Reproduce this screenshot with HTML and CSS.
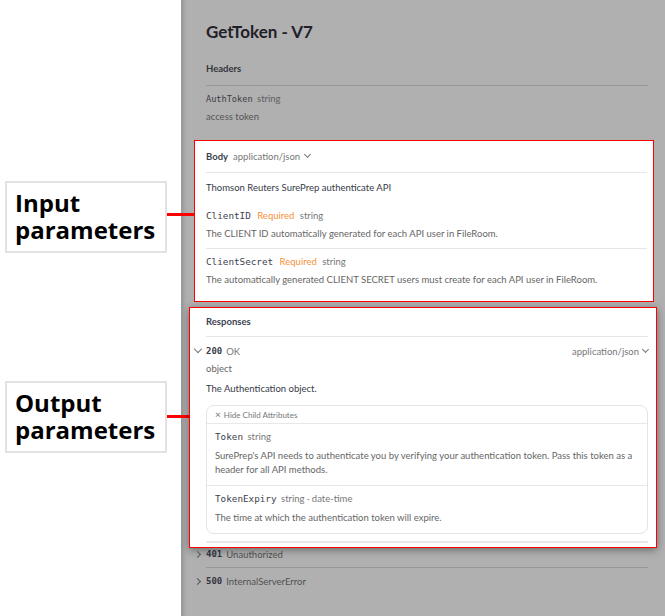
FILE: index.html
```html
<!DOCTYPE html>
<html lang="en">
<head>
<meta name="viewport" content="width=device-width, initial-scale=1">
<title>GetToken - V7</title>
<link rel="stylesheet" href="styles.css">
</head>
<body>

<div class="notes">
    <div class="note note-input">Input parameters</div>
    <div class="note note-output">Output parameters</div>
</div>

<div class="panel">
    <h1 class="title">GetToken - V7</h1>

    <div class="section-head">Headers</div>
    <div class="param"><span class="name">AuthToken</span> <span class="type">string</span></div>
    <div class="desc">access token</div>

    <!-- request body -->
    <div class="callout callout-input">
        <div class="box-head">
            <span class="strong">Body</span>
            <span class="type">application/json</span>
            <span class="chev down"></span>
        </div>
        <div class="lead">Thomson Reuters SurePrep authenticate API</div>
        <div class="field first">
            <div class="param"><span class="name">ClientID</span> <span class="req">Required</span> <span class="type">string</span></div>
            <div class="desc">The CLIENT ID automatically generated for each API user in FileRoom.</div>
        </div>
        <div class="field">
            <div class="param"><span class="name">ClientSecret</span> <span class="req">Required</span> <span class="type">string</span></div>
            <div class="desc">The automatically generated CLIENT SECRET users must create for each API user in FileRoom.</div>
        </div>
    </div>

    <!-- responses -->
    <div class="callout callout-output">
        <div class="box-head">
            <span class="strong">Responses</span>
        </div>
        <div class="status-row">
            <span class="chev down lead-chev"></span>
            <span class="code">200</span> <span class="type">OK</span>
            <span class="spacer"></span>
            <span class="type">application/json</span>
            <span class="chev down"></span>
        </div>
        <div class="object">object</div>
        <div class="lead obj-desc">The Authentication object.</div>

        <div class="children">
            <div class="children-head"><span class="x">&times;</span> Hide Child Attributes</div>
            <div class="child">
                <div class="param"><span class="name">Token</span> <span class="type">string</span></div>
                <div class="desc wrap">SurePrep's API needs to authenticate you by verifying your authentication token. Pass this token as a header for all API methods.</div>
            </div>
            <div class="child">
                <div class="param"><span class="name">TokenExpiry</span> <span class="type">string &middot; date-time</span></div>
                <div class="desc">The time at which the authentication token will expire.</div>
            </div>
        </div>
        <div class="end-rule"></div>
    </div>

    <div class="status-row closed">
        <span class="chev right"></span>
        <span class="code">401</span> <span class="type">Unauthorized</span>
    </div>
    <div class="status-row closed last">
        <span class="chev right"></span>
        <span class="code">500</span> <span class="type">InternalServerError</span>
    </div>
</div>

</body>
</html>
```

FILE: styles.css
```css
* {
    box-sizing: border-box;
}

body {
    margin: 0;
    width: 665px;
    height: 616px;
    display: flex;
    background: #fff;
    font-family: 'Lato', sans-serif;
    font-size: 9.5px;
    overflow: hidden;
}

/* annotation labels on the left */
.notes {
    width: 181px;
    flex: none;
    padding-top: 181px;
}

.note {
    position: relative;
    width: 162px;
    height: 72px;
    margin-left: 5px;
    padding: 6px 0 0 8px;
    border: 2px solid #e2e2e2;
    font-family: 'Open Sans', sans-serif;
    font-weight: 700;
    font-size: 24px;
    line-height: 27px;
    color: #000;
}

.note::after {
    content: '';
    position: absolute;
    top: 30px;
    left: 160px;
    height: 3px;
    background: #f00;
}

.note-input::after {
    width: 27px;
}

.note-output {
    margin-top: 128px;
}

.note-output::after {
    top: 32px;
    width: 22px;
}

/* dimmed docs panel */
.panel {
    flex: 1;
    padding: 22px 17px 0 25px;
    background: linear-gradient(to right, #979797 0, #adadad 5px, #b0b0b0 8px);
    color: #3a3a3a;
}

.title {
    margin: 0;
    font-size: 17px;
    line-height: 20px;
    font-weight: 700;
    color: #1f2029;
}

.section-head {
    margin-top: 20px;
    padding-bottom: 9px;
    border-bottom: 1px solid #979797;
    line-height: 14px;
    font-weight: 700;
    color: #34353d;
}

.param {
    line-height: 14px;
    white-space: nowrap;
}

.panel > .param {
    margin-top: 6px;
}

.name {
    font-family: 'DejaVu Sans Mono', monospace;
    font-size: 8.6px;
    color: #3c3c44;
    margin-right: 2px;
}

.type {
    color: #5f5f5f;
}

.desc {
    margin-top: 4px;
    line-height: 14px;
    color: #555;
}

/* highlighted boxes */
.callout {
    background: #fff;
    border: 1px solid #f00;
}

.callout .type {
    color: #777;
}

.callout .desc {
    color: #666;
}

.callout-input {
    margin: 16px -6px 0 -12px;
    padding: 8px 6px 0 11px;
    height: 162px;
}

.callout-output {
    margin: 5px -9px 0 -17px;
    padding: 6px 8px 0 16px;
    height: 241px;
    box-shadow: 0 2px 8px rgba(0, 0, 0, 0.4);
    position: relative;
}

.box-head {
    display: flex;
    align-items: center;
    gap: 5px;
    height: 14px;
    box-sizing: content-box;
    padding-bottom: 9px;
    border-bottom: 1px solid #e6e6e6;
}

.callout-output .box-head {
    padding-bottom: 8px;
}

.strong {
    font-weight: 700;
    color: #3b3f51;
}

.lead {
    margin-top: 8px;
    line-height: 14px;
    color: #363a48;
}

.field.first {
    margin-top: 14px;
}

.field {
    padding-bottom: 7px;
}

.field + .field {
    border-top: 1px solid #e6e6e6;
    padding-top: 6px;
}

.callout .name {
    font-size: 9.3px;
    color: #40424f;
}

.req {
    color: #f5903a;
    margin: 0 3px 0 2px;
}

.chev {
    display: inline-block;
    width: 5px;
    height: 5px;
    border-right: 1px solid #777;
    border-bottom: 1px solid #777;
}

.chev.down {
    transform: translateY(-2px) rotate(45deg);
}

.chev.right {
    transform: rotate(-45deg);
    border-color: #555;
    margin: 0 2px 0 -11px;
}

/* response rows */
.status-row {
    display: flex;
    align-items: center;
    gap: 4px;
    height: 14px;
    margin-top: 7px;
    white-space: nowrap;
}

.lead-chev {
    margin: 0 1px 0 -11px;
    width: 6px;
    height: 6px;
}

.code {
    font-family: 'DejaVu Sans Mono', monospace;
    font-size: 9px;
    font-weight: 700;
    color: #3c3e4b;
}

.callout .status-row .type:not(:last-of-type) {
    color: #777;
}

.spacer {
    flex: 1;
}

.object {
    margin-top: 4px;
    line-height: 14px;
    color: #666;
}

.obj-desc {
    margin-top: 6px;
}

.children {
    margin-top: 9px;
    border: 1px solid #e4e4e4;
    border-radius: 8px;
    height: 129px;
}

.children-head {
    height: 18px;
    padding-left: 8px;
    line-height: 17px;
    font-size: 8px;
    color: #777;
    border-bottom: 1px solid #e8e8e8;
}

.children-head .x {
    font-size: 10px;
    margin-right: 1px;
}

.child {
    padding: 6px 8px 8px 8px;
}

.child + .child {
    border-top: 1px solid #e8e8e8;
    padding-bottom: 0;
}

.child .desc {
    margin-top: 5px;
}

.end-rule {
    margin-top: 7px;
    height: 2px;
    background: #e8e8e8;
}

.status-row.closed {
    margin-top: -1px;
    height: 14px;
    box-sizing: content-box;
    padding-bottom: 6px;
    border-bottom: 1px solid #979797;
}

.status-row.closed .type {
    color: #505050;
}

.status-row.closed .code {
    color: #34353f;
}

.status-row.last {
    margin-top: 6px;
    border-bottom: none;
}
```
